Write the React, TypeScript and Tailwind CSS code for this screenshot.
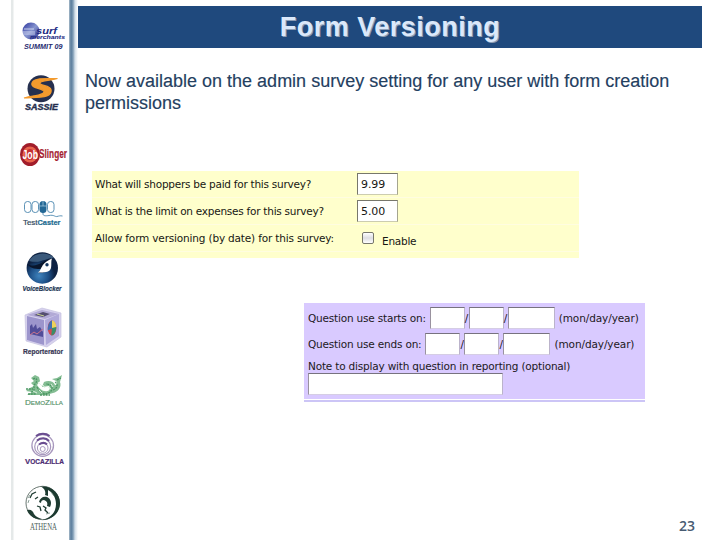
import type { ReactNode } from "react";

function Logo({ children }: { children: ReactNode }) {
    return (
        <svg viewBox="11 0 60 60" className="block h-[60px] w-[60px]">
            {children}
        </svg>
    );
}

function SurfLogo() {
    return (
        <Logo>
            <defs>
                <linearGradient id="surf" x1="0" y1="0" x2="1" y2="1">
                    <stop offset="0" stopColor="#28319c" />
                    <stop offset="0.5" stopColor="#8795cf" />
                    <stop offset="1" stopColor="#20288e" />
                </linearGradient>
            </defs>
            <circle cx="31" cy="31" r="8.5" fill="url(#surf)" />
            <path d="M22 32h13M23 34h12M24 29h10" stroke="#dfe5f8" strokeWidth="0.8" />
            <text x="36" y="33.5" textLength="21" lengthAdjust="spacingAndGlyphs" fontSize="9" fontStyle="italic" fontWeight="bold" fill="#222a83">surf</text>
            <text x="30" y="39" textLength="35" lengthAdjust="spacingAndGlyphs" fontSize="6" fontStyle="italic" fontWeight="bold" fill="#222a83" stroke="#222a83" strokeWidth="0.1">merchants</text>
            <text x="24" y="49" textLength="38.5" lengthAdjust="spacingAndGlyphs" fontSize="6.5" fontStyle="italic" fontWeight="bold" fill="#252b70">SUMMIT 09</text>
        </Logo>
    );
}

function SassieLogo() {
    return (
        <Logo>
            <circle cx="41" cy="28.7" r="13.5" fill="#26304f" />
            <path d="M57.5 18.500C48 19 34 17 32 23c-2 6 13 5 12 9-1 4-11 3-20 6 10-1 25 1 27-6 2-7-12-6-11-9 1-3 10-2 17.500-4.500z" fill="#f39a2d" stroke="#f39a2d" strokeWidth="1.200" />
            <text x="25" y="49.500" textLength="33" lengthAdjust="spacingAndGlyphs" fontSize="9" fontStyle="italic" fontWeight="bold" fill="#252e4e" stroke="#252e4e" strokeWidth="0.4">SASSIE</text>
        </Logo>
    );
}

function JobSlingerLogo() {
    return (
        <Logo>
            <ellipse cx="30" cy="34.500" rx="10" ry="11.500" fill="#a11d2a" />
            <ellipse cx="30" cy="34.500" rx="7.500" ry="8" fill="#e9644c" />
            <ellipse cx="30" cy="34.500" rx="5" ry="5.500" fill="#c52f31" />
            <text x="22.500" y="38.500" textLength="15.500" lengthAdjust="spacingAndGlyphs" fontSize="13" fontWeight="bold" fill="#fff">Job</text>
            <text x="39" y="38" textLength="28" lengthAdjust="spacingAndGlyphs" fontSize="13" fontWeight="bold" fill="#a51c30" stroke="#a51c30" strokeWidth="0.2">Slinger</text>
        </Logo>
    );
}

function TestCasterLogo() {
    return (
        <Logo>
            <g fill="none" stroke="#4b87af" strokeWidth="0.9">
                <rect x="24.500" y="21.500" width="6.500" height="11" rx="3" />
                <rect x="32" y="21.500" width="6.500" height="11" rx="3" />
                <rect x="47.500" y="21.500" width="6.500" height="11" rx="3" />
                <path d="M43 32v2c0 2 3 2 6 1.500 5-1 6 1.500 8 1s3-1 5.500-.5" />
            </g>
            <rect x="39.500" y="21" width="7" height="12" rx="3.500" fill="#226795" />
            <path d="M39.500 26h7M43 21v5" stroke="#acd0e4" strokeWidth="0.7" />
            <text x="23" y="45" textLength="14.500" lengthAdjust="spacingAndGlyphs" fontSize="7.500" fill="#34495c" stroke="#34495c" strokeWidth="0.2">Test</text>
            <text x="37.500" y="45" textLength="23" lengthAdjust="spacingAndGlyphs" fontSize="7.500" fontWeight="bold" fill="#226b91" stroke="#226b91" strokeWidth="0.2">Caster</text>
        </Logo>
    );
}

function VoiceBlockerLogo() {
    return (
        <Logo>
            <defs>
                <radialGradient id="orb" cx="0.4" cy="0.75">
                    <stop offset="0" stopColor="#3f83bd" />
                    <stop offset="0.6" stopColor="#1d4f86" />
                    <stop offset="1" stopColor="#0d2142" />
                </radialGradient>
            </defs>
            <circle cx="42.300" cy="28" r="15.700" fill="url(#orb)" />
            <path d="M29 21c5-9 19-10 25-3-9 0-13 6-25 3z" fill="#7faed3" opacity="0.4" />
            <path d="M27.500 24c9 5 15-4 25-5-1 2-2 3-2 5 1 6-5 9-12 9l4-4c-6 0-12 0-15-5z" fill="#09162d" />
            <path d="M38 32.500c4-2 2-9 14-14-2 5 2 12-6 13.500-3 .5-4 .5-8 .5z" fill="#fff" />
            <circle cx="47" cy="24.800" r="1.700" fill="#12345d" />
            <text x="22.500" y="50.500" textLength="39" lengthAdjust="spacingAndGlyphs" fontSize="6.500" fontStyle="italic" fontWeight="bold" fill="#1d3654" stroke="#1d3654" strokeWidth="0.2">VoiceBlocker</text>
        </Logo>
    );
}

function ReporteratorLogo() {
    return (
        <Logo>
            <path d="M25 15l17-7 19 5v24l-14 10-21-6z" fill="#d6d1ed" stroke="#c6c2df" strokeWidth="0.7" />
            <path d="M27 16l17 4v25l-17-5z" fill="#9c95cc" />
            <path d="M45 20l14-6v22l-13 9z" fill="#b0a9da" />
            <path d="M27 15l15-5 17 4-14 5z" fill="#b2aad6" />
            <path d="M34 15l9-3 7 2-7 3z" fill="#554f71" />
            <path d="M37 14l7 2" stroke="#cbd791" />
            <path d="M30 26l2-2 1 4 3-4 1 5 3-2 3 5v5l-13-3z" fill="#514d99" />
            <path d="M30 35l4-3 3 2 6-5" fill="none" stroke="#ca748d" />
            <ellipse cx="52" cy="28" rx="4.300" ry="7.500" fill="#d44951" />
            <path d="M52 20.500c3 0 4.300 4 4.300 7l-4.300 1z" fill="#eed25c" />
            <path d="M52 28l4.300-1c0 5-3 8.500-5 8.500z" fill="#398d6a" />
            <path d="M52 20.500v8l-4.300 2c0-6 2-9.500 4.300-10z" fill="#4470b2" />
            <text x="23" y="53.500" textLength="40" lengthAdjust="spacingAndGlyphs" fontSize="6.500" fontWeight="bold" fill="#393755" stroke="#393755" strokeWidth="0.2">Reporterator</text>
        </Logo>
    );
}

function DemoZillaLogo() {
    return (
        <Logo>
            <path d="M31 18l4-3 4 2 1 4-3 4c3 4 5 6 8 6 4 1 6-2 4-5l-7 1 2-5c4-2 10-1 11 3 2 0 3-2 1-4l-4-2 5-1 5-3-2 7c2 5-2 10-7 11l-7 2H27l5-3-6-1 4-3 4-2-3-3 3-2z" fill="#84bd93" />
            <path d="M33 19c4-2 5 2 2 5-3 3 2 6-4 8M37 27c4 8 11 8 14 4s-1-7-5-7M53 30c5-2 5-6 2-8M57 20l4-2M28 34h8M40 35h10M26 29h7" fill="none" stroke="#4b9763" strokeWidth="1.300" strokeDasharray="2 0.8" />
            <path d="M38 22l4 4M43 25l2 3M39 30l3 3M51 24l2 3M33 31l4 2M48 27l3 2" stroke="#e4f3e7" strokeWidth="0.900" />
            <text x="25" y="44.700" textLength="38" lengthAdjust="spacingAndGlyphs" fill="#56936a" stroke="#56936a" strokeWidth="0.150"><tspan fontSize="7.500">D</tspan><tspan fontSize="5.800">EMO</tspan><tspan fontSize="7.500">Z</tspan><tspan fontSize="5.800">ILLA</tspan></text>
        </Logo>
    );
}

function VocaZillaLogo() {
    return (
        <Logo>
            <g fill="none" stroke="#a797bd">
                <circle cx="42.700" cy="25.500" r="10.800" strokeWidth="1.300" />
                <circle cx="42.700" cy="26.700" r="8" strokeWidth="1.200" />
                <circle cx="42.700" cy="28" r="5.300" strokeWidth="1" />
                <circle cx="42.700" cy="29" r="2.500" strokeWidth="1" />
            </g>
            <path d="M36 16c4-3 10-3 13.500 0M37 20.500c4-3 9-3 12 .500M39 24.500c3-2 6-2 8 0" fill="none" stroke="#6a4d90" strokeWidth="2" />
            <text x="25" y="44" textLength="39" lengthAdjust="spacingAndGlyphs" fontWeight="bold" fill="#4d2d73" stroke="#4d2d73" strokeWidth="0.200"><tspan fontSize="8">V</tspan><tspan fontSize="6.700">OCA</tspan><tspan fontSize="8">Z</tspan><tspan fontSize="6.700">ILLA</tspan></text>
        </Logo>
    );
}

function AthenaLogo() {
    return (
        <Logo>
            <circle cx="42.700" cy="23" r="16.700" fill="#fff" stroke="#42544c" strokeWidth="0.8" />
            <path d="M41 6.500c11-1 19 7 19 16.500 0 10-8 17-18 17 9-2 14-8 14-16 0-7-4-12-8-14v6l-3-1c1-3 0-6-4-8.500z" fill="#1c3a30" />
            <path d="M39 22c1-4 4-6 8-5 4 2 5 6 3 10l-3-1c1-3 0-5-3-6-2 0-3 1-3 3z" fill="#203d33" />
            <path d="M27 30c4-1 6 1 7 4 2 3 5 4 8 5-7 1-13-3-15-9z" fill="#203d33" />
            <path d="M43 26l3 2-1 2 3 3M37 26l3 1 1 4M36 12l-4 2-2 4M38 17l-3 2" fill="none" stroke="#203d33" strokeWidth="1.300" />
            <path d="M28 18l2-3M28 23l1-3M46 34l4-1M51 12l3 4" stroke="#6d887c" strokeWidth="0.800" />
            <text x="30" y="49.800" textLength="27" lengthAdjust="spacingAndGlyphs" fontSize="10.500" className="font-['Liberation_Serif',serif]" fill="#51635c">ATHENA</text>
        </Logo>
    );
}

function DateRow({ label }: { label: string }) {
    return (
        <div className="flex h-[26px] items-start">
            <span className="pt-[4px]">{label}</span>
            <input aria-label="Month" className="ml-[4px] h-[22px] w-[35px] border border-t-[#77727f] border-r-[#bbb3cb] border-b-[#d5cde4] border-l-[#99929f] bg-white" />
            <span className="w-[4px] pt-[4px]">/</span>
            <input aria-label="Day" className="h-[22px] w-[35px] border border-t-[#77727f] border-r-[#bbb3cb] border-b-[#d5cde4] border-l-[#99929f] bg-white" />
            <span className="w-[4px] pt-[4px]">/</span>
            <input aria-label="Year" className="h-[22px] w-[47px] border border-t-[#77727f] border-r-[#bbb3cb] border-b-[#d5cde4] border-l-[#99929f] bg-white" />
            <span className="ml-[4px] pt-[4px] tracking-[-0.1px]">(mon/day/year)</span>
        </div>
    );
}

export default function App() {
    return (
        <div className="flex h-[540px] w-[720px] overflow-hidden bg-white font-['Liberation_Sans',sans-serif]">
            <aside className="ml-[11px] w-[58px] shrink-0 bg-linear-to-r from-[#e5e9e9] from-[2px] to-white to-[3px]">
                <SurfLogo />
                <SassieLogo />
                <JobSlingerLogo />
                <TestCasterLogo />
                <VoiceBlockerLogo />
                <ReporteratorLogo />
                <DemoZillaLogo />
                <VocaZillaLogo />
                <AthenaLogo />
            </aside>
            <div className="w-[9px] shrink-0 bg-[linear-gradient(to_right,#a9bccb_0px,#587b9b_2px,#7f9cb5_4px,#d3dfe9_6px,#ffffff_9px)]" />

            <main className="flex min-w-0 flex-1 flex-col">
                <h1 className="mt-[6px] h-[42px] w-[624px] bg-[#1f497d] text-center text-[27px] leading-[43px] font-bold tracking-[0.5px] text-[#dbe8fa] [text-shadow:1px_1px_0_#8c9db5]">
                    Form Versioning
                </h1>
                <p className="mt-[22px] ml-[7px] text-[18px] leading-[22px] whitespace-nowrap text-[#24405f] [-webkit-text-stroke:0.15px_#24405f]">
                    Now available on the admin survey setting for any user with form creation
                    <br />
                    permissions
                </p>

                <section className="mt-[57px] ml-[14px] flex h-[87px] w-[487px] flex-col bg-[#ffffcc] font-['DejaVu_Sans',sans-serif] text-[10.5px] leading-[14px] tracking-[-0.25px] whitespace-nowrap text-[#171713]">
                    <div className="flex h-[27px] items-center border-b border-[#fffde0] pl-[3px]">
                        <span className="w-[262px] pb-[1px]">What will shoppers be paid for this survey?</span>
                        <input aria-label="Pay" defaultValue="9.99" className="h-[22px] w-[41px] border border-t-[#77776c] border-r-[#a5a58f] border-b-[#ccccb0] border-l-[#77776c] bg-white px-[3px] text-[11px] tracking-[-0.1px]" />
                    </div>
                    <div className="flex h-[27px] items-center border-b border-[#fffde0] pl-[3px]">
                        <span className="w-[262px] pb-[1px]">What is the limit on expenses for this survey?</span>
                        <input aria-label="Expense limit" defaultValue="5.00" className="h-[22px] w-[41px] border border-t-[#77776c] border-r-[#a5a58f] border-b-[#ccccb0] border-l-[#77776c] bg-white px-[3px] text-[11px] tracking-[-0.1px]" />
                    </div>
                    <div className="flex h-[27px] items-center border-b border-[#fffde0] pl-[3px]">
                        <span className="w-[267px] pb-[1px] tracking-[-0.17px]">Allow form versioning (by date) for this survey:</span>
                        <input type="checkbox" aria-label="Enable" className="h-[12px] w-[12px] appearance-none rounded-[2px] border border-[#77776c] bg-linear-to-b from-white via-[#dddde2] to-white" />
                        <span className="mt-[5px] ml-[8px]">Enable</span>
                    </div>
                </section>

                <section className="mt-[45px] ml-[226px] h-[99px] w-[341px] border-b-2 border-[#ccc5f6] bg-white font-['DejaVu_Sans',sans-serif] text-[10.5px] leading-[14px] tracking-[-0.19px] whitespace-nowrap text-[#1d1923]">
                    <div className="h-[97px] border-b border-white bg-[#d9caff] pt-[4px] pl-[4px]">
                        <DateRow label="Question use starts on:" />
                        <DateRow label="Question use ends on:" />
                        <label className="block">
                            <span className="block h-[14px]">Note to display with question in reporting (optional)</span>
                            <input className="block h-[22px] w-[195px] border border-t-[#77727f] border-r-[#bbb3cb] border-b-[#d5cde4] border-l-[#99929f] bg-white" />
                        </label>
                    </div>
                </section>
                <footer className="mt-auto mr-[25px] mb-[4px] self-end font-['Open_Sans',sans-serif] text-[14px] leading-[20px] font-semibold text-[#485b72]">23</footer>
            </main>
        </div>
    );
}
